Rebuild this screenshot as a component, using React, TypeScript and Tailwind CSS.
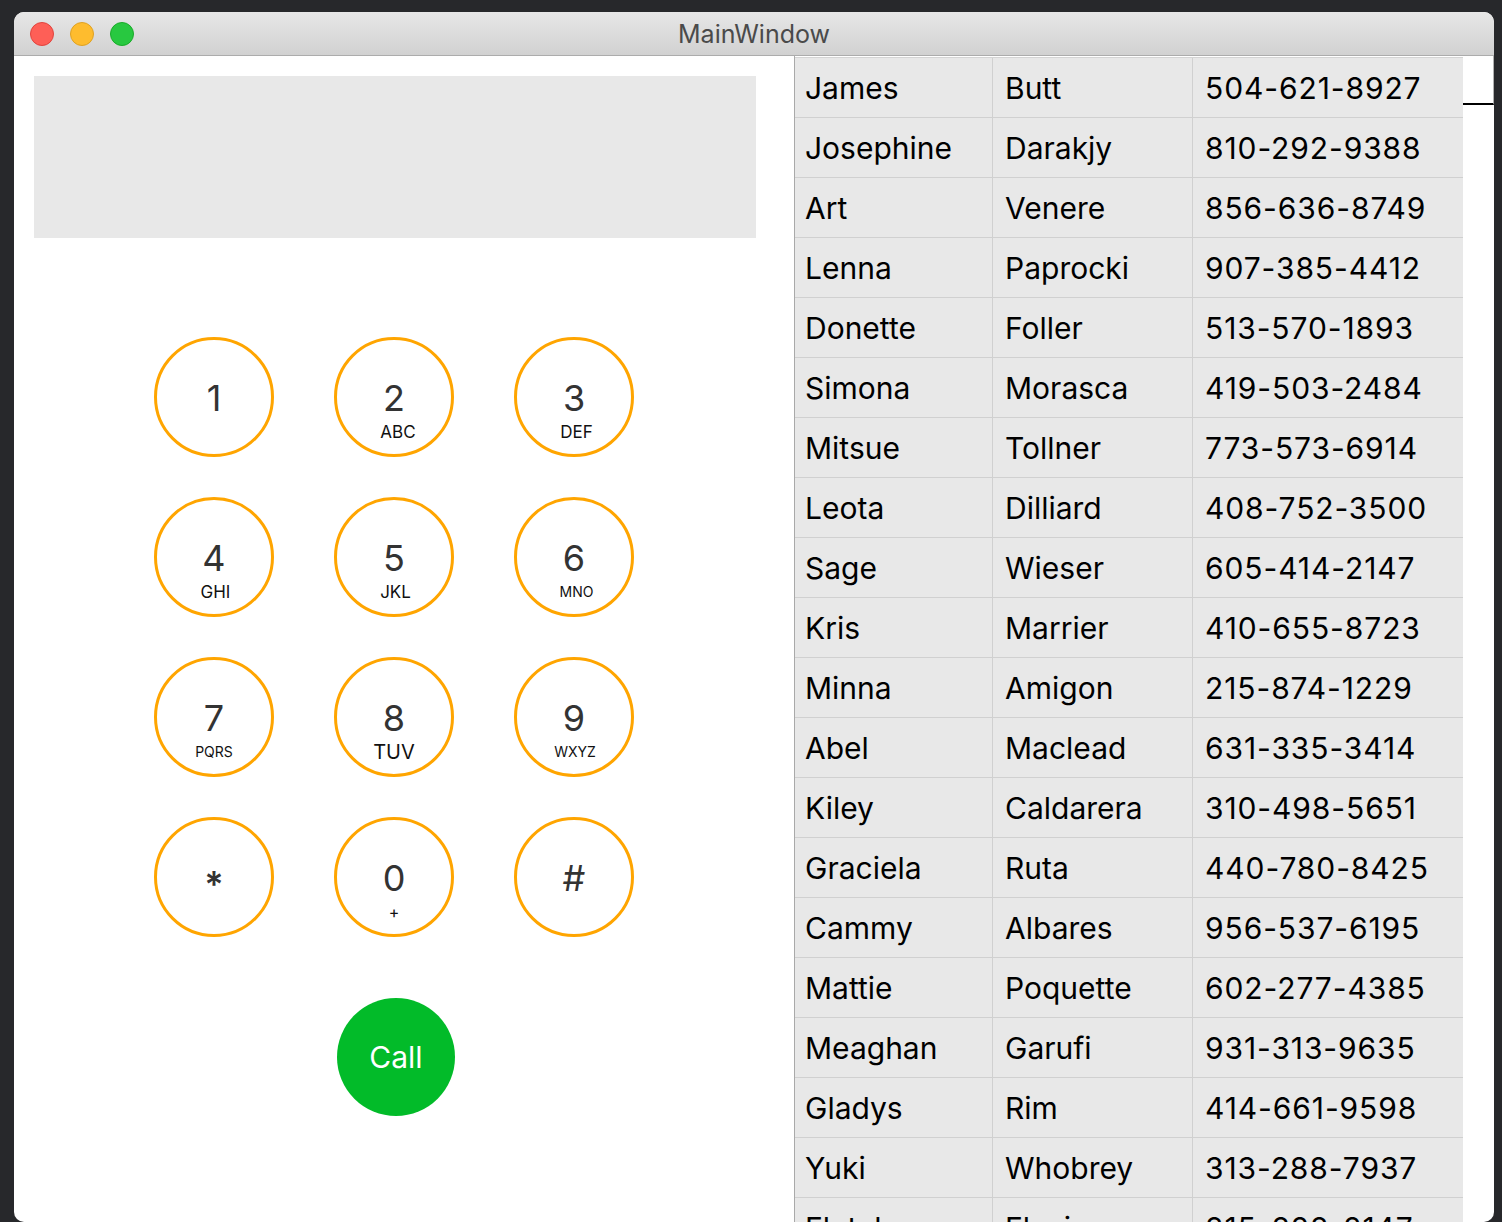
const keys = [
  { d: "1", l: "", s: "" },
  { d: "2", l: "ABC", s: "text-[17px] ml-[8px]" },
  { d: "3", l: "DEF", s: "text-[17px] ml-[5px]" },
  { d: "4", l: "GHI", s: "text-[17px] ml-[3px]" },
  { d: "5", l: "JKL", s: "text-[17px] ml-[3px]" },
  { d: "6", l: "MNO", s: "text-[14px] ml-[5px]" },
  { d: "7", l: "PQRS", s: "text-[14px]" },
  { d: "8", l: "TUV", s: "text-[20px]" },
  { d: "9", l: "WXYZ", s: "text-[14px] ml-[2px]" },
  { d: "*", l: "", s: "" },
  { d: "0", l: "+", s: "text-[16px]" },
  { d: "#", l: "", s: "" },
];

const people = [
  ["James", "Butt", "504-621-8927"],
  ["Josephine", "Darakjy", "810-292-9388"],
  ["Art", "Venere", "856-636-8749"],
  ["Lenna", "Paprocki", "907-385-4412"],
  ["Donette", "Foller", "513-570-1893"],
  ["Simona", "Morasca", "419-503-2484"],
  ["Mitsue", "Tollner", "773-573-6914"],
  ["Leota", "Dilliard", "408-752-3500"],
  ["Sage", "Wieser", "605-414-2147"],
  ["Kris", "Marrier", "410-655-8723"],
  ["Minna", "Amigon", "215-874-1229"],
  ["Abel", "Maclead", "631-335-3414"],
  ["Kiley", "Caldarera", "310-498-5651"],
  ["Graciela", "Ruta", "440-780-8425"],
  ["Cammy", "Albares", "956-537-6195"],
  ["Mattie", "Poquette", "602-277-4385"],
  ["Meaghan", "Garufi", "931-313-9635"],
  ["Gladys", "Rim", "414-661-9598"],
  ["Yuki", "Whobrey", "313-288-7937"],
  ["Fletcher", "Flosi", "815-828-2147"],
];

function Key({ d, l, s }: { d: string; l: string; s: string }) {
  return (
    <button className="w-[120px] h-[120px] rounded-full border-[3px] border-[#ffa500] bg-white flex flex-col items-center pt-[38px]">
      <span
        className={`text-[36px] leading-[40px] text-[#333333] ${d === "*" ? "translate-y-[6px] font-semibold" : ""}`}
      >
        {d}
      </span>
      <span className={`${s} leading-[16px] mt-[6px] text-[#111111]`}>{l}</span>
    </button>
  );
}

export default function App() {
  return (
    <div
      className="w-[1502px] h-[1222px] bg-[#27282b] pt-[12px] pl-[14px] overflow-hidden"
      style={{ fontFamily: "Inter, 'Noto Sans', sans-serif" }}
    >
      <div className="w-[1480px] h-[1210px] bg-white rounded-[10px] overflow-hidden flex flex-col">
        {/* title bar */}
        <div className="relative h-[44px] shrink-0 bg-gradient-to-b from-[#e7e7e7] to-[#d1d1d1] border-b border-[#acacac] flex items-center">
          <div className="flex items-center gap-[16px] pl-[16px]">
            <span className="w-[24px] h-[24px] rounded-full bg-[#fe5f57] border border-[#e0443e]" />
            <span className="w-[24px] h-[24px] rounded-full bg-[#febc2e] border border-[#dea123]" />
            <span className="w-[24px] h-[24px] rounded-full bg-[#28c840] border border-[#1aab29]" />
          </div>
          <div className="absolute inset-0 flex items-center justify-center pt-[3px] text-[25px] text-[#4a4a4a]">
            MainWindow
          </div>
        </div>

        <div className="flex flex-1 min-h-0">
          {/* dialer */}
          <div className="w-[780px] shrink-0 pl-[20px] pt-[20px]">
            <div className="w-[722px] flex flex-col items-center">
              <div className="w-[722px] h-[162px] bg-[#e8e8e8]" />
              <div className="grid grid-cols-3 gap-x-[60px] gap-y-[40px] mt-[99px] mr-[2px]">
                {keys.map((k) => (
                  <Key key={k.d} {...k} />
                ))}
              </div>
              <button className="mt-[61px] w-[118px] h-[118px] rounded-full bg-[#02bb29] text-white text-[30px] mr-[-2px]">
                Call
              </button>
            </div>
          </div>

          {/* contacts table */}
          <div className="flex-1 flex border-l border-[#a9a9a9] min-h-0">
            <div className="w-[668px] shrink-0 border-t border-[#d4d4d4] mt-[1px]">
              {people.map((p) => (
                <div key={p[0]} className="flex h-[60px] bg-[#e8e8e8] border-b border-[#d0d0d0] text-[30px] text-black">
                  <div className="w-[198px] pl-[10px] pt-[2px] border-r border-[#d0d0d0] flex items-center">{p[0]}</div>
                  <div className="w-[200px] pl-[12px] pt-[2px] border-r border-[#d0d0d0] flex items-center">{p[1]}</div>
                  <div className="flex-1 pl-[12px] pt-[2px] tracking-[0.9px] flex items-center">{p[2]}</div>
                </div>
              ))}
            </div>
            <div className="flex-1">
              <div className="h-[49px] border-b-2 border-black border-r border-r-[#b0b0b0]" />
            </div>
          </div>
        </div>
      </div>
    </div>
  );
}
